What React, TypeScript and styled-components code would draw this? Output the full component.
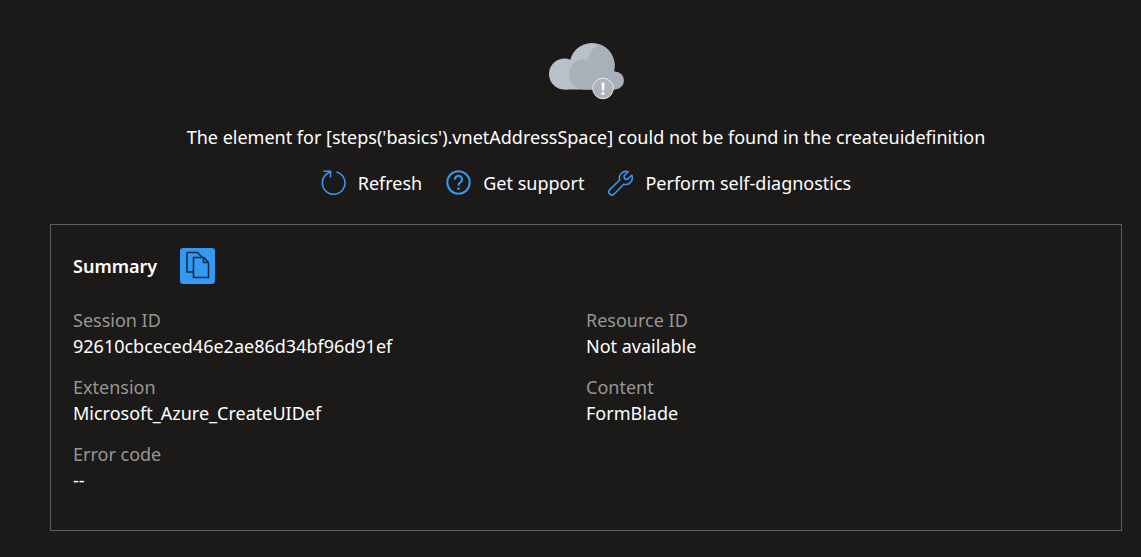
import React from "react";
import styled, { createGlobalStyle } from "styled-components";

const GlobalStyle = createGlobalStyle`
  * { box-sizing: border-box; }
  body {
    margin: 0;
    background: #1b1a19;
    color: #ffffff;
    font-family: "Segoe UI", "Noto Sans", "Open Sans", sans-serif;
    font-size: 18px;
    line-height: 26px;
  }
`;

const Page = styled.main`
  display: flex;
  flex-direction: column;
  align-items: center;
  padding: 40px 19px 26px 50px;
`;

const CloudArt = styled.svg`
  display: block;
  width: 80px;
  height: 62px;
`;

const Message = styled.p`
  margin: 22px 0 20px;
  text-align: center;
`;

const Actions = styled.div`
  display: flex;
  flex-wrap: wrap;
  justify-content: center;
  gap: 24px;
`;

const Action = styled.button`
  display: flex;
  align-items: center;
  gap: 12px;
  padding: 0;
  border: 0;
  background: none;
  color: inherit;
  font: inherit;
  cursor: pointer;
`;

const ActionIcon = styled.svg`
  width: 25px;
  height: 26px;
  fill: none;
  stroke: #3a96ee;
  stroke-width: ${(p: { $weight?: number }) => p.$weight ?? 1.6};
`;

const Panel = styled.section`
  align-self: stretch;
  margin-top: 28px;
  padding: 23px 22px 37px;
  border: 1px solid #605e5c;
`;

const PanelHeader = styled.header`
  display: flex;
  align-items: center;
  gap: 23px;
  margin-bottom: 23px;
`;

const PanelTitle = styled.h2`
  margin: 0;
  font-size: 18px;
  font-weight: 600;
`;

const CopyButton = styled.button`
  display: flex;
  align-items: center;
  justify-content: center;
  width: 35px;
  height: 36px;
  padding: 0;
  border: 0;
  border-radius: 3px;
  background: #3399f3;
  cursor: pointer;
`;

const Details = styled.dl`
  display: grid;
  grid-template-columns: 1fr 1fr;
  row-gap: 15px;
  margin: 0;
`;

const Label = styled.dt`
  color: #979593;
`;

const Value = styled.dd`
  margin: 0;
  overflow-wrap: anywhere;
`;

const fields = [
  ["Session ID", "92610cbceced46e2ae86d34bf96d91ef"],
  ["Resource ID", "Not available"],
  ["Extension", "Microsoft_Azure_CreateUIDef"],
  ["Content", "FormBlade"],
  ["Error code", "--"],
];

export default function App() {
  return (
    <>
      <GlobalStyle />
      <Page>
        <CloudArt viewBox="0 0 80 62" aria-hidden="true">
          <g fill="#b9c0c9">
            <circle cx="18.500" cy="34" r="15.500" />
            <circle cx="46" cy="25.500" r="22.500" />
            <path d="M18.500 30H50V49.500H18.500z" />
          </g>
          <g fill="#a9b0ba">
            <circle cx="38" cy="34.500" r="15" />
            <circle cx="69" cy="40.500" r="9" />
            <path d="M38 49.500V22L42 20C43 13 48 6 54 4.500A22.500 22.500 0 0 1 68.300 29.800L69 49.500z" />
          </g>
          <circle cx="57" cy="48.500" r="10.300" fill="#adb4bd" stroke="#e8ebee" strokeWidth="1" />
          <path d="M55.500 42.500h3l-.5 8h-2z" fill="#fff" />
          <circle cx="57" cy="53.500" r="1.500" fill="#fff" />
        </CloudArt>
        <Message>
          The element for [steps('basics').vnetAddressSpace] could not be found in the createuidefinition
        </Message>
        <Actions>
          <Action type="button">
            <ActionIcon viewBox="0 0 25 26" aria-hidden="true">
              <path d="M15.500 2A11.300 11.300 0 1 1 5.500 4.200L9.500 1.300M2.500 1.300H9.500V7.500" />
            </ActionIcon>
            Refresh
          </Action>
          <Action type="button">
            <ActionIcon viewBox="0 0 25 26" $weight={2} aria-hidden="true">
              <circle cx="12.500" cy="12.500" r="11.200" />
              <path d="M9 9.700A3.500 3.500 0 1 1 14.300 12.300Q12.500 13.500 12.500 15.800" />
              <circle cx="12.500" cy="18.700" r="1.300" fill="#3a96ee" stroke="none" />
            </ActionIcon>
            Get support
          </Action>
          <Action type="button">
            <ActionIcon viewBox="0 0 25 26" strokeLinejoin="round" aria-hidden="true">
              <path d="M20.200 1.800A6.600 6.600 0 0 0 11.700 10L1.800 19.600A3 3 0 0 0 6.200 24L15.700 14.200A6.600 6.600 0 0 0 23.700 5.200L19.500 9.300L16.600 8.900L16 6Z" />
            </ActionIcon>
            Perform self-diagnostics
          </Action>
        </Actions>
        <Panel aria-labelledby="summary-title">
          <PanelHeader>
            <PanelTitle id="summary-title">Summary</PanelTitle>
            <CopyButton type="button" aria-label="Copy summary">
              <svg width="35" height="36" viewBox="0 0 35 36" fill="none" stroke="#14293d" strokeWidth="1.500" aria-hidden="true">
                <path d="M13 24H7V4.500H17.500L22 9M13.500 9.500H24L28.500 14.500V29.500H13.500ZM23.500 9.500V14.500H28.500" />
              </svg>
            </CopyButton>
          </PanelHeader>
          <Details>
            {fields.map(([label, value]) => (
              <div key={label}>
                <Label>{label}</Label>
                <Value>{value}</Value>
              </div>
            ))}
          </Details>
        </Panel>
      </Page>
    </>
  );
}
